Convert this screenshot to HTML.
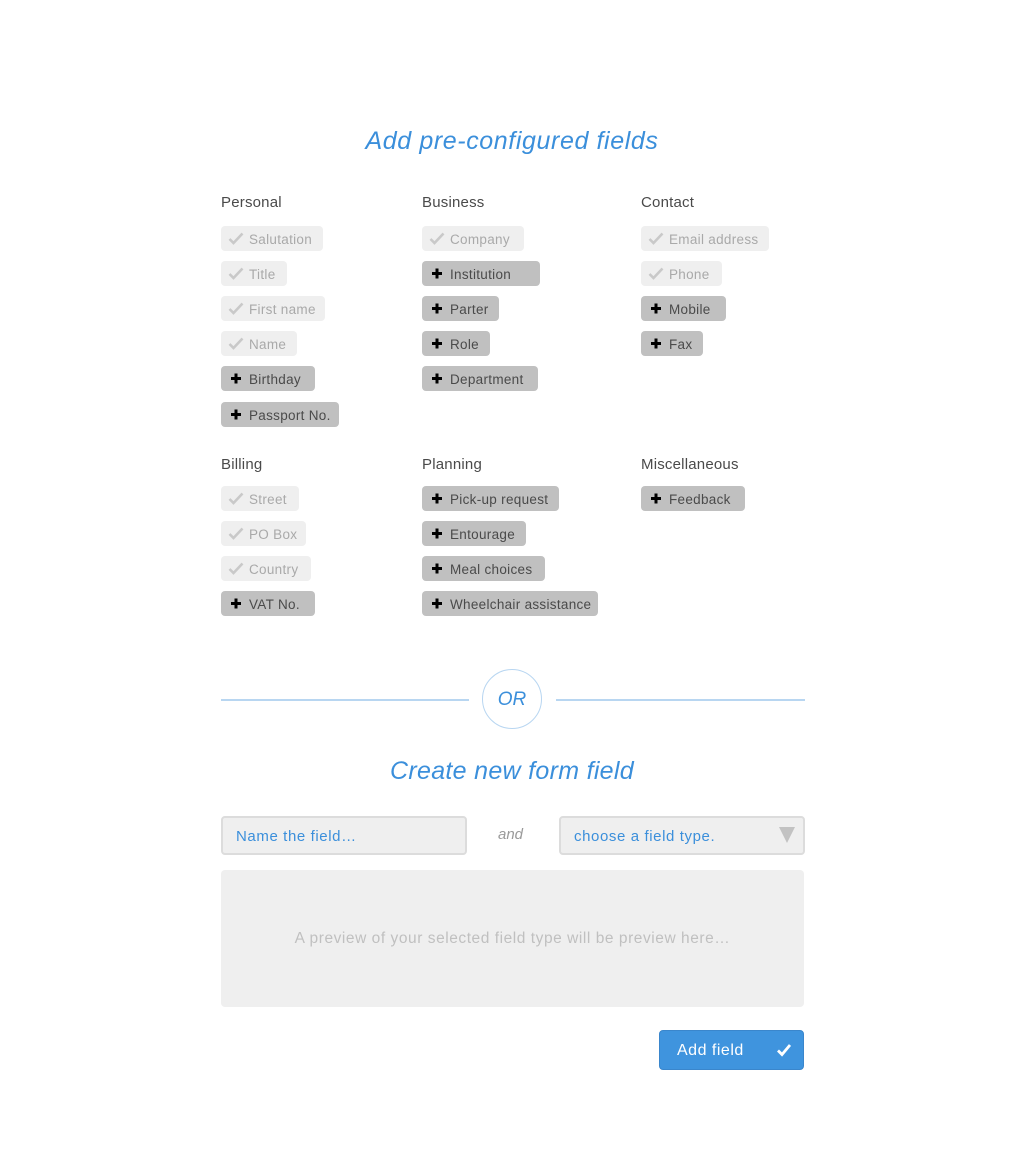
<!DOCTYPE html>
<html><head><meta charset="utf-8"><style>
*{margin:0;padding:0;box-sizing:border-box}
body{width:1024px;height:1169px;background:#fff;font-family:"Liberation Sans",sans-serif;position:relative;overflow:hidden}
.a{position:absolute}
h1{position:absolute;left:0;width:1024px;text-align:center;font-weight:normal;font-style:italic;color:#3b8fdb;font-size:25px;letter-spacing:0.6px}
.hd{position:absolute;font-size:15px;color:#4a4a4a;letter-spacing:0.2px}
.c{position:absolute;height:25px;border-radius:4px;font-size:13.5px;line-height:27px;padding-left:28px;white-space:nowrap;letter-spacing:0.3px}
.l{background:#efefef;color:#a9a9a9}
.d{background:#c0c0c0;color:#4a4a4a}
.c svg{position:absolute;left:7px;top:6px}
</style></head><body>
<h1 style="top:127px">Add pre-configured fields</h1>

<div class="hd" style="left:221px;top:194px">Personal</div>
<div class="hd" style="left:422px;top:194px">Business</div>
<div class="hd" style="left:641px;top:194px">Contact</div>
<div class="hd" style="left:221px;top:456px">Billing</div>
<div class="hd" style="left:422px;top:456px">Planning</div>
<div class="hd" style="left:641px;top:456px">Miscellaneous</div>

<svg width="0" height="0" style="position:absolute"><defs>
<symbol id="ck" viewBox="0 0 16 13"><path d="M1.5 7 L5.5 11 L14.5 1.5" fill="none" stroke="#c9c9c9" stroke-width="2.6"/></symbol>
<symbol id="pl" viewBox="0 0 16 13"><path d="M8 1.5 V11.5 M3 6.5 H13" fill="none" stroke="#000" stroke-width="3"/></symbol>
</defs></svg>

<div class="c l" style="left:221px;top:226px;width:102px"><svg width="16" height="13"><use href="#ck"/></svg>Salutation</div>
<div class="c l" style="left:221px;top:261px;width:66px"><svg width="16" height="13"><use href="#ck"/></svg>Title</div>
<div class="c l" style="left:221px;top:296px;width:104px"><svg width="16" height="13"><use href="#ck"/></svg>First name</div>
<div class="c l" style="left:221px;top:331px;width:76px"><svg width="16" height="13"><use href="#ck"/></svg>Name</div>
<div class="c d" style="left:221px;top:366px;width:94px"><svg width="16" height="13"><use href="#pl"/></svg>Birthday</div>
<div class="c d" style="left:221px;top:402px;width:118px"><svg width="16" height="13"><use href="#pl"/></svg>Passport No.</div>

<div class="c l" style="left:422px;top:226px;width:102px"><svg width="16" height="13"><use href="#ck"/></svg>Company</div>
<div class="c d" style="left:422px;top:261px;width:118px"><svg width="16" height="13"><use href="#pl"/></svg>Institution</div>
<div class="c d" style="left:422px;top:296px;width:77px"><svg width="16" height="13"><use href="#pl"/></svg>Parter</div>
<div class="c d" style="left:422px;top:331px;width:68px"><svg width="16" height="13"><use href="#pl"/></svg>Role</div>
<div class="c d" style="left:422px;top:366px;width:116px"><svg width="16" height="13"><use href="#pl"/></svg>Department</div>

<div class="c l" style="left:641px;top:226px;width:128px"><svg width="16" height="13"><use href="#ck"/></svg>Email address</div>
<div class="c l" style="left:641px;top:261px;width:81px"><svg width="16" height="13"><use href="#ck"/></svg>Phone</div>
<div class="c d" style="left:641px;top:296px;width:85px"><svg width="16" height="13"><use href="#pl"/></svg>Mobile</div>
<div class="c d" style="left:641px;top:331px;width:62px"><svg width="16" height="13"><use href="#pl"/></svg>Fax</div>

<div class="c l" style="left:221px;top:486px;width:78px"><svg width="16" height="13"><use href="#ck"/></svg>Street</div>
<div class="c l" style="left:221px;top:521px;width:85px"><svg width="16" height="13"><use href="#ck"/></svg>PO Box</div>
<div class="c l" style="left:221px;top:556px;width:90px"><svg width="16" height="13"><use href="#ck"/></svg>Country</div>
<div class="c d" style="left:221px;top:591px;width:94px"><svg width="16" height="13"><use href="#pl"/></svg>VAT No.</div>

<div class="c d" style="left:422px;top:486px;width:137px"><svg width="16" height="13"><use href="#pl"/></svg>Pick-up request</div>
<div class="c d" style="left:422px;top:521px;width:104px"><svg width="16" height="13"><use href="#pl"/></svg>Entourage</div>
<div class="c d" style="left:422px;top:556px;width:123px"><svg width="16" height="13"><use href="#pl"/></svg>Meal choices</div>
<div class="c d" style="left:422px;top:591px;width:176px"><svg width="16" height="13"><use href="#pl"/></svg>Wheelchair assistance</div>

<div class="c d" style="left:641px;top:486px;width:104px"><svg width="16" height="13"><use href="#pl"/></svg>Feedback</div>

<div class="a" style="left:221px;top:699px;width:248px;height:1.5px;background:#b8d6f1"></div>
<div class="a" style="left:556px;top:699px;width:249px;height:1.5px;background:#b8d6f1"></div>
<div class="a" style="left:482px;top:669px;width:60px;height:60px;border:1.5px solid #b8d6f1;border-radius:50%;text-align:center;line-height:59px;font-size:19px;font-style:italic;color:#3b8fdb">OR</div>

<h1 style="top:757px;letter-spacing:0.3px">Create new form field</h1>

<div class="a" style="left:221px;top:816px;width:246px;height:39px;background:#efefef;border:2px solid #dcdcdc;border-radius:4px;padding-left:13px;line-height:37px;font-size:15px;letter-spacing:0.6px;color:#3b8fdb">Name the field…</div>
<div class="a" style="left:498px;top:826px;font-size:15px;font-style:italic;color:#9a9a9a">and</div>
<div class="a" style="left:559px;top:816px;width:246px;height:39px;background:#efefef;border:2px solid #dcdcdc;border-radius:4px;padding-left:13px;line-height:37px;font-size:15px;letter-spacing:0.6px;color:#3b8fdb">choose a field type.
<div class="a" style="right:8px;top:9px;width:0;height:0;border-left:8px solid transparent;border-right:8px solid transparent;border-top:16px solid #c2c2c2"></div></div>

<div class="a" style="left:221px;top:870px;width:583px;height:137px;background:#efefef;border-radius:4px;text-align:center;line-height:137px;font-size:15.5px;letter-spacing:0.55px;color:#c0c0c0">A preview of your selected field type will be preview here…</div>

<div class="a" style="left:659px;top:1030px;width:145px;height:40px;background:#3f94de;border:1px solid #3a86cc;border-radius:4px;color:#fff;font-size:16px;line-height:40px;padding-left:17px;letter-spacing:0.5px">Add field
<svg class="a" style="right:11px;top:12px" width="16" height="14" viewBox="0 0 16 14"><path d="M2 7.5 L6 11.5 L14 2" fill="none" stroke="#fff" stroke-width="2.8"/></svg></div>
</body></html>
